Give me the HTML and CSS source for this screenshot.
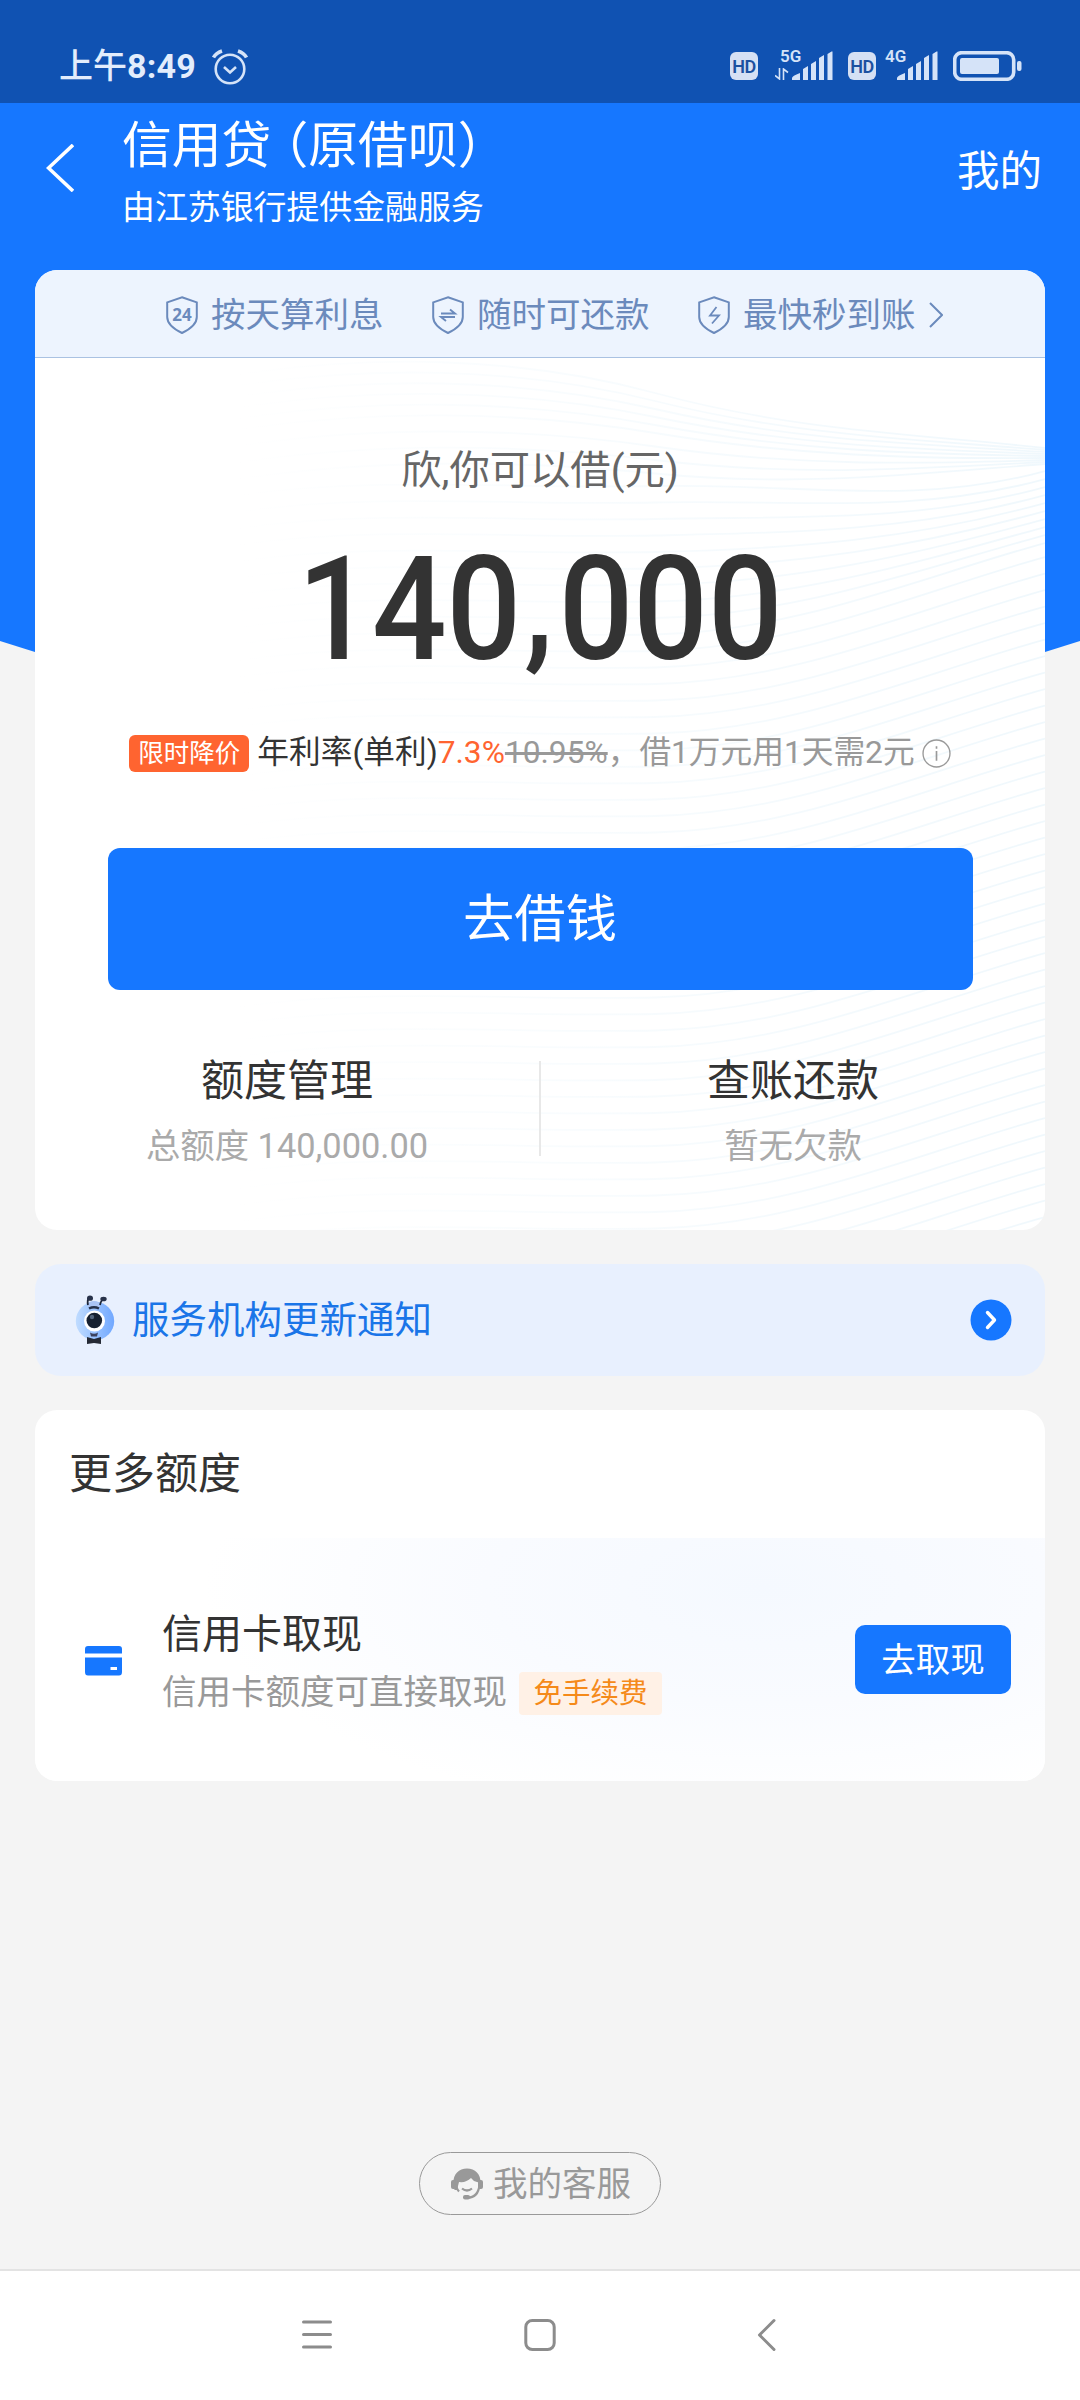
FILE: index.html
```html
<!DOCTYPE html>
<html lang="zh-CN">
<head>
<meta charset="utf-8">
<title>信用贷</title>
<link rel="stylesheet" href="styles.css">
</head>
<body>
<svg class="defs" width="0" height="0" aria-hidden="true">
  <symbol id="shield" viewBox="0 0 32 38"><path d="M16 1.2 30.8 6.4V21c0 7.200-6.500 12-14.800 16C7.700 33 1.200 28.200 1.200 21V6.400Z" fill="none" stroke="currentColor" stroke-width="2"/></symbol>
  <symbol id="bars" viewBox="0 0 41 30"><path d="M0 29v-2q0-2 8-5v7zM11 29V18l5-3v14zM19 29V13l5-3v19zM27 29V7l5-3v25zM35.500 29V3L39.500 0.500h1V29z" fill="currentColor"/></symbol>
</svg>
<div class="screen">
  <div class="statusbar">
    <div class="clock">上午<span class="digits">8:49</span></div>
    <svg class="alarm" viewBox="0 0 36 36" fill="none" stroke="currentColor"><circle cx="18" cy="20" r="14.300" stroke-width="2.600"/><path d="m12 18 6 5.500 6-5.500" stroke-width="2.600"/><path d="M1.500 8.500Q4 4 10 2M34.500 8.500Q32 4 26 2" stroke-width="3.600"/></svg>
    <div class="indicators">
      <span class="hd">HD</span>
      <span class="net net-a"><b>5G</b><svg class="updown" viewBox="0 0 14 12"><path d="M4.500 0v11L0 7.500M8.500 12V1L13 4.500" fill="none" stroke="currentColor" stroke-width="1.600"/></svg><svg class="bars"><use href="#bars"/></svg></span>
      <span class="hd">HD</span>
      <span class="net net-b"><b>4G</b><svg class="bars"><use href="#bars"/></svg></span>
      <svg class="battery" viewBox="0 0 69 30"><rect x="1.700" y="1.700" width="59" height="26.600" rx="7" fill="none" stroke="currentColor" stroke-width="3.600"/><rect x="7" y="7" width="39" height="16" rx="2" fill="currentColor"/><rect x="64" y="10" width="4.500" height="10" rx="2" fill="currentColor"/></svg>
    </div>
  </div>

  <header class="header">
    <svg class="back" viewBox="0 0 28 48"><path d="M27 1 2.500 24 27 47" fill="none" stroke="currentColor" stroke-width="3.600"/></svg>
    <div class="titles">
      <h1>信用贷<span class="paren-l">（</span>原借呗<span class="paren-r">）</span></h1>
      <p>由江苏银行提供金融服务</p>
    </div>
    <a class="mine">我的</a>
  </header>

  <main>
    <section class="card loan">
      <div class="perks">
        <span class="perk"><span class="shield"><svg><use href="#shield"/></svg><i>24</i></span>按天算利息</span>
        <span class="perk"><span class="shield"><svg><use href="#shield"/></svg><svg class="mark" viewBox="0 0 32 38"><path d="M9 17.500h14l-5-4M23 21H9l5 4" fill="none" stroke="currentColor" stroke-width="1.900"/></svg></span>随时可还款</span>
        <span class="perk"><span class="shield"><svg><use href="#shield"/></svg><svg class="mark" viewBox="0 0 32 38"><path d="m18.500 11-6.500 8.500h9L14 27.500" fill="none" stroke="currentColor" stroke-width="1.800"/></svg></span>最快秒到账<svg class="more" viewBox="0 0 14 26"><path d="m1 1 12 12L1 25" fill="none" stroke="currentColor" stroke-width="2"/></svg></span>
      </div>
      <div class="loan-body">
        <svg class="waves" viewBox="0 0 1010 872" fill="none"><defs><linearGradient id="fade" gradientUnits="userSpaceOnUse" x1="200" y1="0" x2="1010" y2="0"><stop offset="0" stop-color="#e3f2fa" stop-opacity="0"/><stop offset="1" stop-color="#e3f2fa" stop-opacity=".55"/></linearGradient></defs><g id="waves" stroke="url(#fade)" stroke-width="1.800"></g></svg>
        <p class="greet">欣,你可以借(元)</p>
        <p class="amount">140<span class="comma">,</span>000</p>
        <p class="rate"><span class="badge">限时降价</span><span class="rate-name">年利率(单利)</span><span class="rate-now">7.3%</span><s>10.95%</s><span class="rate-note">，借1万元用1天需2元</span><svg class="info" viewBox="0 0 28 28" fill="none" stroke="currentColor"><circle cx="14" cy="14" r="13" stroke-width="1.300"/><path d="M14 11.500V21M14 7v2.500" stroke-width="1.600"/></svg></p>
        <button class="borrow">去借钱</button>
        <div class="links">
          <div class="link"><h2>额度管理</h2><p>总额度 140,000.00</p></div>
          <div class="link"><h2>查账还款</h2><p>暂无欠款</p></div>
        </div>
      </div>
    </section>

    <section class="notice">
      <svg class="ant" viewBox="0 0 40 50"><defs><linearGradient id="body" x1="0" y1="0" x2="1" y2="0"><stop offset="0" stop-color="#c0dcff"/><stop offset="1" stop-color="#71a8ff"/></linearGradient></defs><circle cx="20" cy="26" r="19.200" fill="url(#body)"/><ellipse cx="19" cy="10" rx="6.500" ry="4" fill="#aac4f5"/><path d="M13 10Q12 5 14 3M25 10Q26 5 29 3.500" fill="none" stroke="#1d2638" stroke-width="1.800"/><ellipse cx="15" cy="3.200" rx="3" ry="2.600" fill="#28324a"/><ellipse cx="28.500" cy="4" rx="3.200" ry="2.300" fill="#28324a"/><path d="M14 13.500q5-2.500 10 0" stroke="#26324c" stroke-width="2.400" fill="none"/><circle cx="19.500" cy="26" r="10.500" fill="#fff"/><circle cx="19.300" cy="25.500" r="7.800" fill="#172131"/><circle cx="17" cy="22" r="2.200" fill="#53657c"/><path d="M15 37.500q4 2.500 8 0l-1 4h-6z" fill="#3c425e"/><path d="m12 42 7 2 7-2v7l-7-1-7 1z" fill="#252a35"/></svg>
      <span>服务机构更新通知</span>
      <svg class="go" viewBox="0 0 42 42"><circle cx="21" cy="21" r="20.500" fill="#1677ff"/><path d="m17.500 13.500 7 7.500-7 7.500" fill="none" stroke="#fff" stroke-width="3.400" stroke-linecap="round" stroke-linejoin="round"/></svg>
    </section>

    <section class="card quota">
      <h2>更多额度</h2>
      <div class="quota-row">
        <svg class="bankcard" viewBox="0 0 37 30"><path d="M3 0h31q3 0 3 3v4.500H0V3q0-3 3-3zM0 11.500h37V26q0 3.500-3 3.500H3q-3 0-3-3.500zM25.500 21v3h6.500v-3z" fill="#1677ff" fill-rule="evenodd"/></svg>
        <div class="quota-text">
          <h3>信用卡取现</h3>
          <p>信用卡额度可直接取现<span class="tag">免手续费</span></p>
        </div>
        <button class="cash">去取现</button>
      </div>
    </section>
  </main>

  <footer class="service">
    <a><svg viewBox="0 0 32 32"><path d="M2.500 15C2 6 8 0.500 16 0.500S30 6 29.500 15L26 14q-4-1-6-4-5 5-12 4l-2 8H3.500z" fill="#999"/><rect x="0" y="12" width="5" height="9" rx="2" fill="#999"/><rect x="27" y="12" width="5" height="9" rx="2" fill="#999"/><path d="M5.500 13Q4.500 20 8 23.500M28.500 17Q27 30 16 29.700M11 20.500q5 4 10 0" fill="none" stroke="#999" stroke-width="2.200"/><rect x="12" y="27" width="7" height="4.500" rx="2" fill="#999"/></svg>我的客服</a>
  </footer>

  <nav class="navbar">
    <svg viewBox="0 0 34 34"><path d="M3.500 4h27M3.500 16.500h27M3.500 29h27"/></svg>
    <svg viewBox="0 0 34 34"><rect x="2.800" y="2.500" width="28.400" height="29" rx="6.500"/></svg>
    <svg viewBox="0 0 34 34"><path d="M28 2.500 13.500 17 28 31.500"/></svg>
  </nav>
</div>
<script src="waves.js"></script>
</body>
</html>
```
FILE: waves.js
```js
// Decorative contour lines: bundled at the upper right, fanning out downwards.
const group = document.getElementById('waves');
for (let i = 0; i < 62; i++) {
  const bundled = i < 9;
  const mid = 5 + (i < 5 ? i * 11 : 55 + (i - 5) * 16.5);
  const end = bundled ? 90 + i * 2 : mid - Math.min(92, 13 + (i - 9) * 8.5);
  const left = mid + 12;
  const c1 = bundled ? mid - 8 : mid + 5;
  const join = mid + (bundled ? 30 - i * 3 : 2);
  const c2 = end + (bundled ? -14 + i * 3 : 36);
  const path = document.createElementNS('http://www.w3.org/2000/svg', 'path');
  path.setAttribute('d', `M200 ${left}C330 ${mid - 8} 480 ${c1} 620 ${join}S880 ${c2} 1010 ${end}`);
  group.appendChild(path);
}
```
FILE: styles.css
```css
* { box-sizing: border-box; margin: 0; padding: 0; }
body { font-family: Roboto, "Noto Sans CJK SC", sans-serif; background: #f4f4f4; color: #333; }
h1, h2, h3 { font-weight: 400; }
svg { display: block; flex: none; }
button { border: 0; font: inherit; color: #fff; background: #1677ff; }
.defs { position: absolute; }
.screen { position: relative; z-index: 0; width: 1080px; height: 2400px; display: flex; flex-direction: column; overflow: hidden; }
.screen::before { content: ""; position: absolute; z-index: -1; inset: 0 0 auto; height: 800px; background: #1677ff; clip-path: polygon(0 0, 100% 0, 100% 641px, 1045px 652px, 50% 800px, 35px 652px, 0 641px); }

.statusbar { height: 103px; flex: none; background: #1052b2; color: #d5e3f8; display: flex; padding: 49px 58px 0 59px; }
.clock { font-size: 34px; line-height: 34px; font-weight: 500; color: #e3edfc; white-space: nowrap; width: 153px; }
.digits { font-weight: 700; letter-spacing: .2px; }
.alarm { width: 36px; height: 36px; }
.indicators { margin-left: auto; display: flex; }
.hd { width: 28px; height: 28px; margin-top: 3px; border-radius: 6px; background: #d5e0f4; color: #1b50a0; font-size: 18px; line-height: 30px; font-weight: 600; text-align: center; letter-spacing: -.5px; }
.net { display: grid; position: relative; height: 32px; }
.net b { position: absolute; top: 0; font-size: 17px; line-height: 14px; font-weight: 600; }
.net-a { width: 90px; }
.net-a b { left: 22px; }
.net-b { width: 77px; }
.net-b b { left: 9px; }
.updown { position: absolute; left: 17px; top: 19px; width: 14px; height: 12px; }
.bars { position: absolute; top: 2px; width: 41px; height: 30px; }
.net-a .bars { left: 34px; }
.net-b .bars { left: 21px; }
.battery { width: 69px; height: 30px; margin-top: 2px; }

.header { height: 167px; flex: none; display: flex; color: #fff; padding: 0 38px 0 46px; }
.back { width: 28px; height: 48px; margin-top: 41px; }
.titles { margin-left: 48px; flex: 1; }
h1 { font-size: 49.800px; line-height: 56px; margin-top: 15px; white-space: nowrap; }
.paren-l, .paren-r { font-feature-settings: "halt"; }
.paren-l { margin-left: 12px; }
.titles p { font-size: 32.900px; line-height: 40px; margin-top: 14px; }
.mine { font-size: 42.500px; line-height: 50px; margin-top: 44px; }

main { padding: 0 35px; display: flex; flex-direction: column; gap: 34px; }
.card { background: #fff; border-radius: 22px; overflow: hidden; }
.loan { height: 960px; }
.perks { height: 88px; background: #edf4fe; border-bottom: 1px solid #aac2e2; color: #6b8abc; display: flex; align-items: center; padding: 2px 0 0 131px; font-size: 34.500px; line-height: 40px; }
.perk { display: flex; align-items: center; white-space: nowrap; margin-right: 48.500px; }
.shield { position: relative; width: 32px; height: 38px; margin-right: 13px; }
.shield svg { width: 32px; height: 38px; }
.shield .mark { position: absolute; inset: 0; }
.shield i { position: absolute; inset: 0; text-align: center; font: 700 17px/37px "Open Sans", sans-serif; }
.more { width: 14px; height: 26px; margin-left: 13px; }
.loan-body { position: relative; z-index: 0; height: 872px; display: flex; flex-direction: column; align-items: center; }
.waves { position: absolute; z-index: -1; inset: 0; width: 1010px; height: 872px; }
.greet { margin-top: 88px; font-size: 40.300px; line-height: 50px; color: #666; }
.amount { margin-top: 38px; height: 150px; font-size: 145px; line-height: 150px; font-weight: 500; white-space: nowrap; transform: scaleX(.905); }
.comma { position: relative; top: -8px; letter-spacing: 6px; margin-left: 3px; }
.rate { margin-top: 49px; height: 40px; display: flex; align-items: center; font-size: 31.700px; line-height: 40px; white-space: nowrap; color: #999; }
.badge { height: 37px; width: 120px; border-radius: 6px; background: #ff6430; color: #fff; font-size: 25.500px; line-height: 36px; text-align: center; margin-right: 8px; }
.rate-name { color: #333; }
.rate-now { color: #ff6430; }
.info { width: 29px; height: 29px; margin-left: 7px; }
.borrow { width: 865px; height: 142px; margin-top: 75px; border-radius: 12px; font-size: 51.300px; line-height: 143px; }
.links { margin-top: 71px; width: 100%; display: grid; grid-template-columns: 504px 506px; text-align: center; }
.link { height: 95px; }
.link + .link { border-left: 2px solid #e8e8e8; }
.link h2 { font-size: 43px; line-height: 50px; margin-top: -5px; }
.link p { font-size: 34.400px; line-height: 40px; margin-top: 20px; color: #aaa; }

.notice { height: 112px; border-radius: 26px; background: #e8f0fe; color: #1a75e8; display: flex; align-items: center; padding: 0 33px 0 40px; font-size: 37.500px; line-height: 50px; }
.ant { width: 40px; height: 50px; margin-right: 17px; }
.go { width: 42px; height: 42px; margin-left: auto; }

.quota { height: 371px; }
.quota > h2 { font-size: 43px; line-height: 50px; padding: 39px 34px 0; height: 128px; }
.quota-row { height: 243px; display: flex; padding: 0 34px 0 50px; background: radial-gradient(ellipse 560px 230px at 730px 50px, #f5f9ff 0, #f9fbff 50%, #fff 100%); }
.bankcard { width: 37px; height: 30px; margin-top: 108px; }
.quota-text { margin-left: 40px; }
.quota-text h3 { font-size: 40px; line-height: 50px; margin-top: 72px; }
.quota-text p { font-size: 34.500px; line-height: 41px; margin-top: 12px; color: #999; display: flex; white-space: nowrap; }
.tag { width: 143px; height: 43px; margin-left: 12px; border-radius: 4px; background: #fff1e6; color: #f58a1a; font-size: 28.500px; line-height: 43px; text-align: center; }
.cash { width: 156px; height: 69px; margin: 87px 0 0 auto; border-radius: 10px; font-size: 34.500px; line-height: 70px; }

.service { margin-top: auto; margin-bottom: 54px; display: flex; justify-content: center; }
.service a { width: 242px; height: 63px; border: 1px solid #999; border-radius: 32px; display: flex; align-items: center; padding-left: 31px; gap: 10px; font-size: 34.500px; line-height: 60px; color: #999; }
.service svg { width: 32px; height: 32px; }

.navbar { height: 131px; flex: none; border-top: 2px solid #e3e3e3; background: #fff; display: flex; justify-content: space-between; padding: 47px 300px 0; }
.navbar svg { width: 34px; height: 34px; fill: none; stroke: #8c8c8c; stroke-width: 3; stroke-linecap: round; stroke-linejoin: round; }
```
